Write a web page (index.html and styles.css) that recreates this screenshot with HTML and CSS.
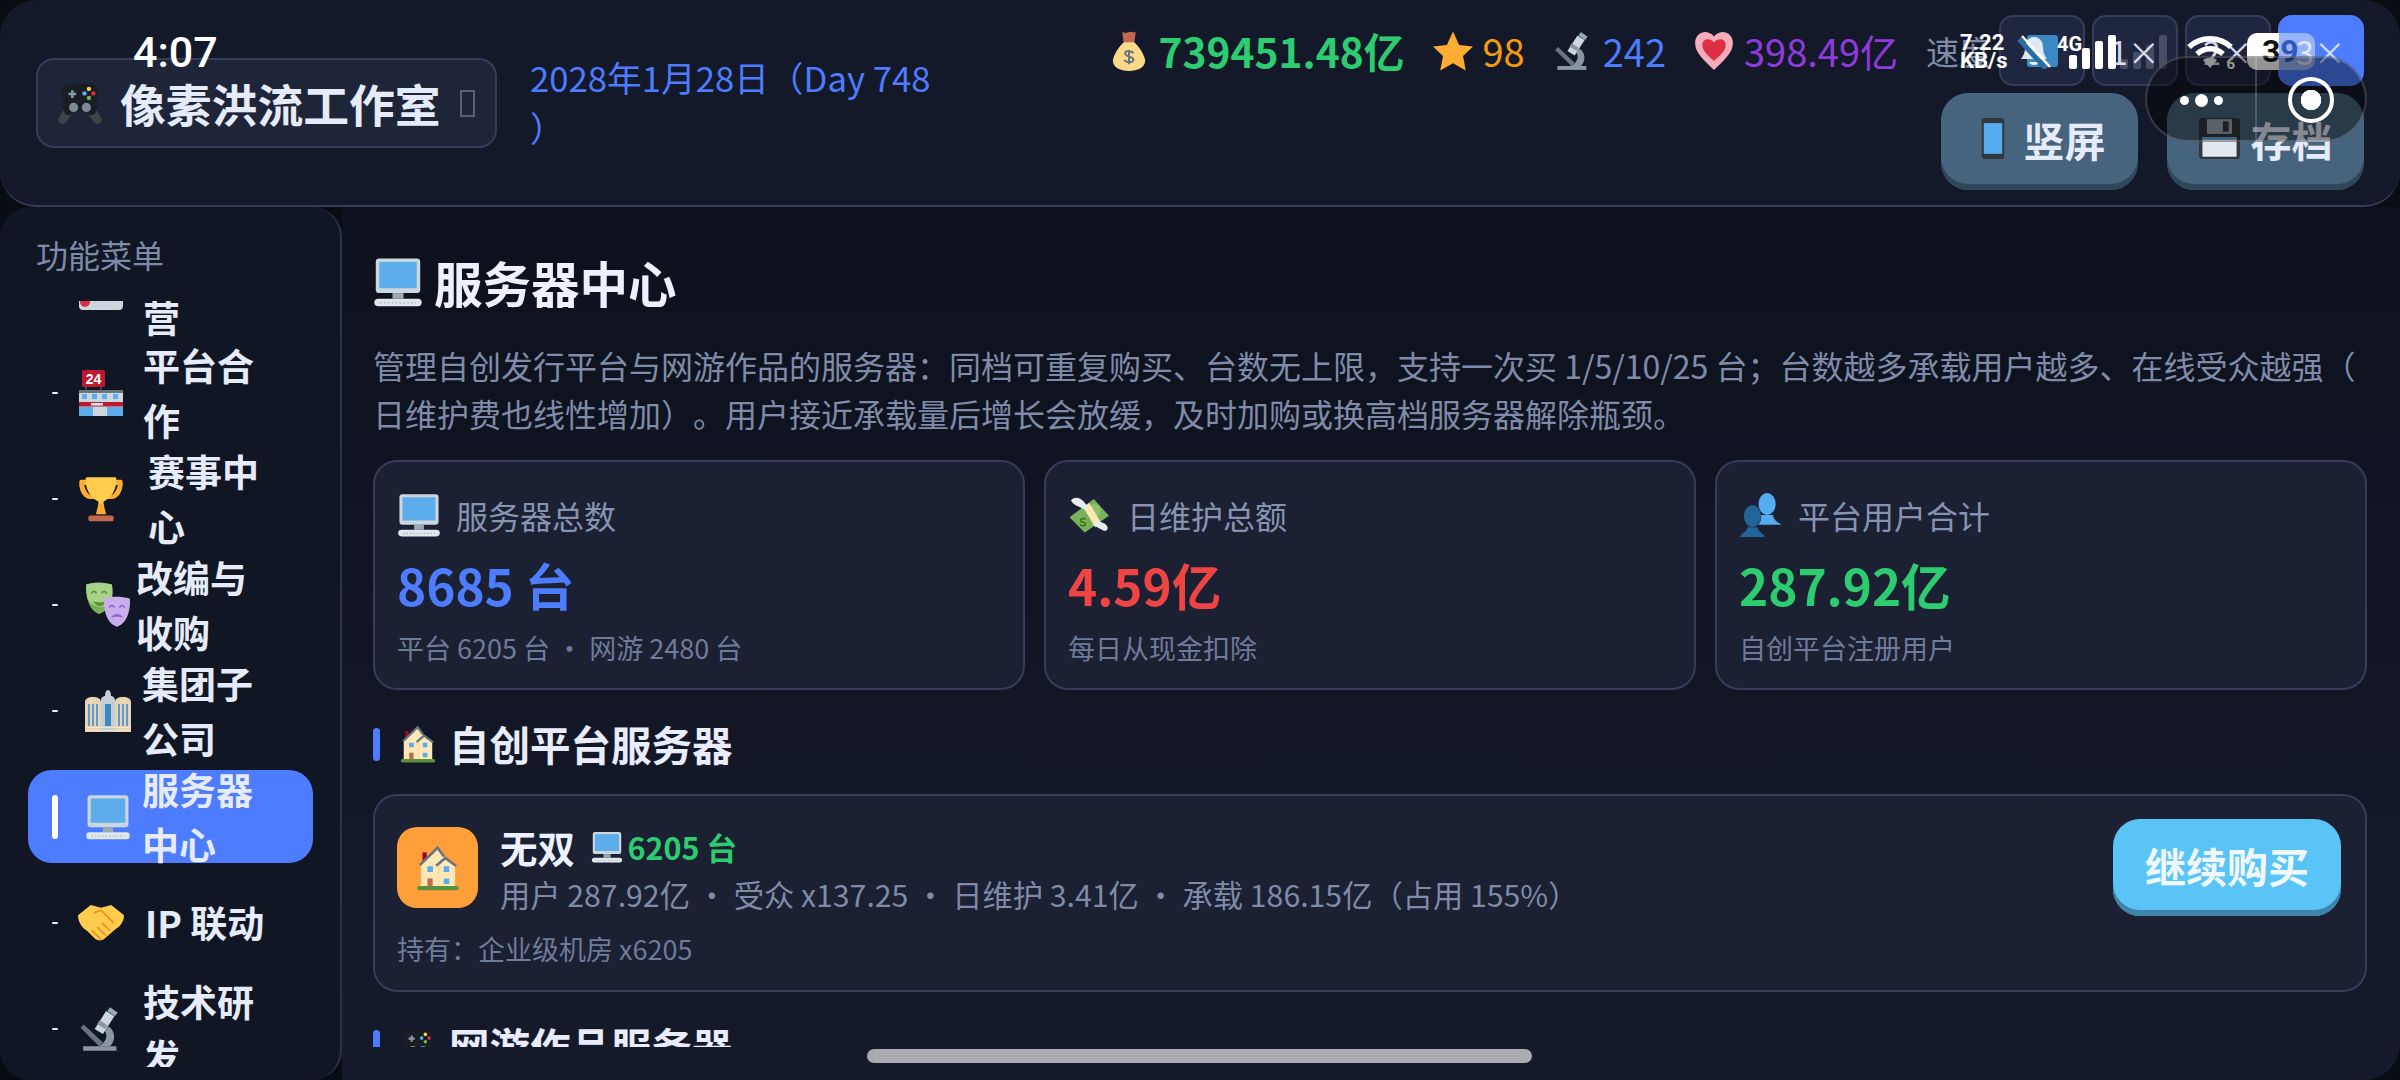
FILE: index.html
```html
<!DOCTYPE html>
<html lang="zh-CN">
<head>
<meta charset="UTF-8">
<meta name="viewport" content="width=device-width, initial-scale=1.0">
<title>像素洪流工作室 - 服务器中心</title>
<link rel="stylesheet" href="styles.css">
</head>
<body>

<!-- emoji drawn as symbols, reused below -->
<svg class="sprites" xmlns="http://www.w3.org/2000/svg">
    <symbol id="i-desktop" viewBox="0 0 36 36">
        <rect x="2" y="1" width="32" height="25" rx="2.5" fill="#ccd6dd"/>
        <rect x="4.5" y="3.5" width="27" height="19" fill="#5dadec"/>
        <rect x="14" y="26" width="8" height="4" fill="#99aab5"/>
        <rect x="1" y="30" width="34" height="5.5" rx="2.7" fill="#e1e8ed"/>
        <path d="M5 33h26" stroke="#a8b4bc" stroke-width="1" stroke-dasharray="1.2 1.6"/>
    </symbol>
    <symbol id="i-gamepad" viewBox="0 0 36 36">
        <path d="M7 20 1 31c0 3 3 4 5 3l6-7zM29 20l6 11c0 3-3 4-5 3l-6-7z" fill="#3d4349"/>
        <path d="M10 3h16c4 0 6 3 6 7l-1 13c-1 5-5 6-8 3-2-2-8-2-10 0-3 3-7 2-8-3L4 10c0-4 2-7 6-7z" fill="#1a1e22"/>
        <path d="M9 10h2V8h2v2h2v2h-2v2h-2v-2H9z" fill="#8899a6"/>
        <circle cx="25" cy="7" r="1.7" fill="#ffcc4d"/>
        <circle cx="25" cy="14" r="1.7" fill="#77b255"/>
        <circle cx="21.5" cy="10.5" r="1.7" fill="#5dadec"/>
        <circle cx="28.5" cy="10.5" r="1.7" fill="#dd2e44"/>
        <circle cx="13" cy="21.5" r="3.6" fill="#7b8a96"/>
        <circle cx="23" cy="21.5" r="3.6" fill="#7b8a96"/>
    </symbol>
    <symbol id="i-money" viewBox="0 0 36 36">
        <path d="M12 1c2 1 4 1 6 0s4 1 6 0l-1 8H13z" fill="#bf6952"/>
        <path d="M14.500 9h7c5 4 11 13 11 18 0 6-7 9-14.500 9S3.500 33 3.500 27c0-5 6-14 11-18z" fill="#fdd888"/>
        <rect x="13" y="7.500" width="10" height="2.600" rx="1" fill="#bf6952"/>
        <path d="M22 20c-1-2-7-3-7.500 0-.5 3.500 7.500 2.500 7.500 6 0 3-7 2.500-8 0M18 17v13" fill="none" stroke="#67757f" stroke-width="1.800"/>
    </symbol>
    <symbol id="i-star" viewBox="0 0 36 36">
        <path d="M18 .5 23.500 12.500 36 14l-9 8.500 2.500 13L18 29 6.500 35.500 9 22.500 0 14l12.500-1.500z" fill="#ffac33"/>
    </symbol>
    <symbol id="i-micro" viewBox="0 0 36 36">
        <path d="M4 35h26v-3.500H4z" fill="#8a97a2"/>
        <path d="M2 17l2.500-2.500 15 14-3 3z" fill="#66757f"/>
        <path d="M24 16c5 3 6 11 1 15.500h-9c5-2 8-8 5-12z" fill="#8a97a2"/>
        <path d="M22 4l6.500 4-9 14-6.500-4z" fill="#ccd6dd"/>
        <path d="M17 11l6 4-2 3-6-4z" fill="#8a97a2"/>
        <path d="M25 1l6 4-2 3-6-4z" fill="#99aab5"/>
    </symbol>
    <symbol id="i-heart" viewBox="0 0 36 36">
        <path d="M18 35C10 27 1 20 1 11 1 5 5 1 10.500 1c3 0 6 2 7.500 4 1.500-2 4.500-4 7.500-4C31 1 35 5 35 11c0 9-9 16-17 24z" fill="#f4abba"/>
        <path d="M18 27C13 22 7.500 18 7.500 12.500c0-3 2-5 5-5 2 0 4 1 5.500 3 1.500-2 3.500-3 5.500-3 3 0 5 2 5 5C28.500 18 23 22 18 27z" fill="#dd2e44"/>
    </symbol>
    <symbol id="i-phone" viewBox="0 0 24 40">
        <rect x="1" y="0" width="22" height="40" rx="3" fill="#31373d"/>
        <rect x="3" y="5" width="18" height="30" fill="#55acee"/>
    </symbol>
    <symbol id="i-floppy" viewBox="0 0 36 36">
        <rect x="0" y="0" width="36" height="36" rx="3" fill="#31373d"/>
        <rect x="7" y="1" width="22" height="13" fill="#99aab5"/>
        <rect x="21" y="3" width="5" height="9" fill="#31373d"/>
        <rect x="3" y="17" width="30" height="17" fill="#e1e8ed"/>
        <rect x="3" y="17" width="30" height="2" fill="#55acee"/>
    </symbol>
    <symbol id="i-hidden" viewBox="0 0 44 46">
        <rect x="0" y="20" width="44" height="26" rx="4" fill="#ccd6dd"/>
        <circle cx="6" cy="38" r="5" fill="#dd2e44"/>
    </symbol>
    <symbol id="i-trophy" viewBox="0 0 36 36">
        <path d="M8 3H3c-2 0-2 1-2 3 0 4 2 11 8 12h4v-3H10C7 14 5 9 5 7h3zM28 3h5c2 0 2 1 2 3 0 4-2 11-8 12h-4v-3h3c3-1 5-6 5-8h-3z" fill="#ffac33"/>
        <path d="M7 1h22c1 0 1 1 1 2 0 9-5 15-10 17v5h-4v-5C11 18 6 12 6 3c0-1 0-2 1-2z" fill="#ffcc4d"/>
        <path d="M16 22h4l2 8h-8z" fill="#ffac33"/>
        <rect x="8" y="31" width="20" height="4.500" rx="2" fill="#c1694f"/>
    </symbol>
    <symbol id="i-masks" viewBox="0 0 36 36">
        <path d="M1 2c6-2 13-2 20 0 1 8 0 20-10 23C3 23 0 10 1 2z" fill="#77b255"/>
        <path d="M1 2c6-2 13-2 20 0 1 5 1 11-2 16-7 3-14 1-17-5-1-4-1-8-1-11z" fill="#a6d388"/>
        <path d="M6 15c3 5 9 5 11 0-3 1-8 1-11 0z" fill="#5c913b"/>
        <path d="M5 9c1-2 3-2 4 0M13 9c1-2 3-2 4 0" fill="none" stroke="#5c913b" stroke-width="1.200"/>
        <path d="M15 13c6-2 13-2 20 0 1 8-2 20-10 22-8-2-11-14-10-22z" fill="#c8aeeb"/>
        <path d="M20 28c2-4 8-4 10 0-3-1-7-1-10 0z" fill="#9266cc"/>
        <path d="M19 20c1-2 3-2 4 0M27 20c1-2 3-2 4 0" fill="none" stroke="#9266cc" stroke-width="1.200"/>
    </symbol>
    <symbol id="i-corp" viewBox="0 0 46 42">
        <path d="M0 12c0-3 3-5 8-5s8 2 8 5v30H0zM30 12c0-3 3-5 8-5s8 2 8 5v30H30z" fill="#e8d3b4"/>
        <path d="M16 10c0-3 3-4 4-4 0-3 1-6 3-6s3 3 3 6c1 0 4 1 4 4v32H16z" fill="#c4ced6"/>
        <path d="M3 14h2v22H3zM7 14h2v22H7zM11 14h2v22h-2zM33 14h2v22h-2zM37 14h2v22h-2zM41 14h2v22h-2z" fill="#5d9ccf"/>
        <path d="M20 14h6v22h-6z" fill="#3b88c3"/>
        <path d="M0 37.500h46M0 40.500h46" stroke="#f5e4c8" stroke-width="1.200"/>
    </symbol>
    <symbol id="i-shake" viewBox="0 0 36 36">
        <path d="M0 12 10 4l8 2 8-2 10 8c0 5-3 9-7 11l-9 8c-2 1-5 1-7-1l-6-6C3 22 0 17 0 12z" fill="#ffcc4d"/>
        <path d="M11 24l7 7M15 21l7 7M19 18l6 6M12 10l6-2 10 10" fill="none" stroke="#f19020" stroke-width="1.400"/>
    </symbol>
    <symbol id="i-wings" viewBox="20 15 145 125">
        <path d="M25 85 105 25l50 55-80 55z" fill="#78b159"/>
        <circle cx="108" cy="62" r="20" fill="#8fc46c"/>
        <path d="M70 52 90 38l40 67-20 13z" fill="#ffe8b6"/>
        <path d="M78 92c-6-6-18-2-16 5s16 2 16 10-14 8-19 2" fill="none" stroke="#3e721d" stroke-width="5"/>
        <path d="M30 30c5-10 20-12 30-6 12 7 20 18 26 28l-10 10C62 50 38 48 30 30zM100 108l12-10c14 2 34 6 38 18 3 9-4 16-12 13-12-5-26-13-38-21z" fill="#e6ebf0"/>
    </symbol>
    <symbol id="i-busts" viewBox="0 0 36 36">
        <ellipse cx="23" cy="9" rx="7" ry="9" fill="#55acee"/>
        <path d="M16 26c3-4 2-8 2-8h10s-1 4 7 8z" fill="#55acee"/>
        <ellipse cx="11" cy="19" rx="7" ry="9" fill="#226699"/>
        <path d="M1 36c1-4 5-3 6-8h8c1 5 5 4 6 8z" fill="#226699"/>
    </symbol>
    <symbol id="i-house" viewBox="60 65 135 140">
        <rect x="80" y="87" width="13" height="30" fill="#a0041e"/>
        <path d="M75 125 125 75l25 30 30 23v62H75z" fill="#ffe8b6"/>
        <path d="M130 128v62" stroke="#f0cf8f" stroke-width="2"/>
        <path d="M72 126 126 73l20 27M122 128l28-24 33 25" fill="none" stroke="#66757f" stroke-width="8"/>
        <rect x="95" y="167" width="16" height="24" fill="#c1694f"/>
        <path d="M95 130h17v17H95zM145 130h17v17h-17zM145 167h17v17h-17z" fill="#55acee"/>
        <rect x="64" y="190" width="127" height="13" rx="6" fill="#5c913b"/>
    </symbol>
</svg>

<header class="topbar">
    <div class="brand">
        <svg class="emo brand-icon"><use href="#i-gamepad"/></svg>
        <span class="brand-name">像素洪流工作室</span>
        <span class="tofu"></span>
    </div>
    <div class="date">2028年1月28日（Day 748 ）</div>
    <div class="topbar-right">
        <div class="stats-row">
            <div class="stat">
                <svg class="emo stat-icon"><use href="#i-money"/></svg>
                <span class="stat-money">739451.48亿</span>
            </div>
            <div class="stat">
                <svg class="emo stat-icon"><use href="#i-star"/></svg>
                <span class="stat-star">98</span>
            </div>
            <div class="stat">
                <svg class="emo stat-icon"><use href="#i-micro"/></svg>
                <span class="stat-tech">242</span>
            </div>
            <div class="stat">
                <svg class="emo stat-icon"><use href="#i-heart"/></svg>
                <span class="stat-fans">398.49亿</span>
            </div>
            <span class="speed-label">速度</span>
            <div class="speed-btns">
                <button class="speed-btn"><span class="pause-square"></span></button>
                <button class="speed-btn">1×</button>
                <button class="speed-btn">2×</button>
                <button class="speed-btn speed-btn--on">3×</button>
            </div>
        </div>
        <div class="action-row">
            <button class="action-btn"><svg class="emo action-phone"><use href="#i-phone"/></svg>竖屏</button>
            <button class="action-btn"><svg class="emo action-floppy"><use href="#i-floppy"/></svg>存档</button>
        </div>
    </div>
</header>

<div class="layout">
    <aside class="sidebar">
        <div class="sidebar-title">功能菜单</div>
        <nav class="nav-list">
            <a class="nav-item nav-item--first pos-store">
                <span class="nav-bar"></span>
                <svg class="emo nav-icon"><use href="#i-hidden"/></svg>
                <span class="nav-text">平台运营</span>
            </a>
            <a class="nav-item pos-store">
                <span class="nav-bar"></span>
                <svg class="emo nav-icon" viewBox="0 0 44 46">
                    <rect x="3" y="0" width="23" height="17" rx="1.500" fill="#be1931"/>
                    <text x="14.500" y="14" text-anchor="middle" class="sign-text">24</text>
                    <path d="M7 17v3M22 17v3" stroke="#66757f"/>
                    <rect x="0" y="20" width="44" height="26" rx="1.500" fill="#ccd6dd"/>
                    <rect x="0" y="20" width="44" height="3" fill="#66757f"/>
                    <path d="M3 24h5v5H3zM13 24h5v5h-5zM23 24h5v5h-5zM34 24h5v5h-5z" fill="#5dadec"/>
                    <rect x="0" y="32" width="44" height="4.500" fill="#be1931"/>
                    <rect x="12" y="33" width="12" height="2.500" fill="#e1e8ed"/>
                    <path d="M0 37h14v9H0zM28 37h16v9H28z" fill="#5dadec"/>
                </svg>
                <span class="nav-text">平台合作</span>
            </a>
            <a class="nav-item pos-trophy">
                <span class="nav-bar"></span>
                <svg class="emo nav-icon"><use href="#i-trophy"/></svg>
                <span class="nav-text">赛事中心</span>
            </a>
            <a class="nav-item pos-masks">
                <span class="nav-bar"></span>
                <svg class="emo nav-icon"><use href="#i-masks"/></svg>
                <span class="nav-text">改编与收购</span>
            </a>
            <a class="nav-item pos-corp">
                <span class="nav-bar"></span>
                <svg class="emo nav-icon"><use href="#i-corp"/></svg>
                <span class="nav-text">集团子公司</span>
            </a>
            <a class="nav-item nav-item--active pos-corp">
                <span class="nav-bar"></span>
                <svg class="emo nav-icon"><use href="#i-desktop"/></svg>
                <span class="nav-text">服务器中心</span>
            </a>
            <a class="nav-item pos-ip">
                <span class="nav-bar"></span>
                <svg class="emo nav-icon"><use href="#i-shake"/></svg>
                <span class="nav-text nav-text--line">IP 联动</span>
            </a>
            <a class="nav-item pos-store">
                <span class="nav-bar"></span>
                <svg class="emo nav-icon"><use href="#i-micro"/></svg>
                <span class="nav-text">技术研发</span>
            </a>
        </nav>
    </aside>

    <main class="main">
        <div class="main-scroll">
            <h1 class="page-title"><svg class="emo title-icon"><use href="#i-desktop"/></svg>服务器中心</h1>
            <p class="page-desc">管理自创发行平台与网游作品的服务器：同档可重复购买、台数无上限，支持一次买 1/5/10/25 台；台数越多承载用户越多、在线受众越强（日维护费也线性增加）。用户接近承载量后增长会放缓，及时加购或换高档服务器解除瓶颈。</p>

            <div class="summary-grid">
                <div class="summary-card">
                    <div class="summary-label"><svg class="emo summary-icon"><use href="#i-desktop"/></svg>服务器总数</div>
                    <div class="summary-value val-blue">8685 台</div>
                    <div class="summary-sub">平台 6205 台 · 网游 2480 台</div>
                </div>
                <div class="summary-card">
                    <div class="summary-label"><svg class="emo summary-icon"><use href="#i-wings"/></svg>日维护总额</div>
                    <div class="summary-value val-red">4.59亿</div>
                    <div class="summary-sub">每日从现金扣除</div>
                </div>
                <div class="summary-card">
                    <div class="summary-label"><svg class="emo summary-icon"><use href="#i-busts"/></svg>平台用户合计</div>
                    <div class="summary-value val-green">287.92亿</div>
                    <div class="summary-sub">自创平台注册用户</div>
                </div>
            </div>

            <h2 class="section-title"><svg class="emo section-icon"><use href="#i-house"/></svg>自创平台服务器</h2>
            <div class="server-card">
                <div class="server-info">
                    <div class="server-head">
                        <div class="server-thumb"><svg class="emo thumb-icon"><use href="#i-house"/></svg></div>
                        <div class="server-lines">
                            <div class="server-name">无双 <svg class="emo name-icon"><use href="#i-desktop"/></svg><span class="server-count">6205 台</span></div>
                            <div class="server-meta">用户 287.92亿 · 受众 x137.25 · 日维护 3.41亿 · 承载 186.15亿（占用 155%）</div>
                        </div>
                    </div>
                    <div class="server-own">持有：企业级机房 x6205</div>
                </div>
                <button class="buy-btn">继续购买</button>
            </div>

            <h2 class="section-title section-title--next"><svg class="emo section-icon"><use href="#i-gamepad"/></svg>网游作品服务器</h2>
        </div>
    </main>
</div>

<!-- phone system layer on top of the page -->
<div class="sys-time">4:07</div>
<div class="sys-status">
    <div class="sys-speed">7.22<br>KB/s</div>
    <svg class="sys-bell" viewBox="0 0 34 34">
        <path d="M17 2c6 0 9 5 9 11 0 5 2 8 4 11H4c2-3 4-6 4-11 0-6 3-11 9-11z" fill="#eef2f8" fill-opacity="0.92"/>
        <path d="M12 27c1 4 9 4 10 0z" fill="#eef2f8"/>
        <path d="M2 4l27 30" stroke="#2a6d9e" stroke-width="5"/>
        <path d="M5 1l28 31" stroke="#fff" stroke-width="2.500"/>
    </svg>
    <div class="sys-net">4G</div>
    <svg class="sys-signal" viewBox="0 0 50 34">
        <rect x="0" y="20" width="8" height="14" rx="2"/>
        <rect x="13" y="13" width="8" height="21" rx="2"/>
        <rect x="26" y="6" width="8" height="28" rx="2"/>
        <rect x="39" y="0" width="8" height="34" rx="2"/>
    </svg>
    <svg class="sys-ghost" viewBox="0 0 50 34">
        <rect x="0" y="24" width="8" height="10" rx="2"/>
        <rect x="13" y="17" width="8" height="17" rx="2"/>
        <rect x="26" y="10" width="8" height="24" rx="2"/>
        <rect x="39" y="0" width="8" height="34" rx="2"/>
    </svg>
    <div class="sys-wifi">
        <svg viewBox="0 0 46 32">
            <path d="M2 11C14 0 32 0 44 11" fill="none" stroke="#fff" stroke-width="5.500"/>
            <path d="M10 18c8-7 18-7 26 0" fill="none" stroke="#fff" stroke-width="5.500"/>
            <path d="M23 32l-7-8c4-3 10-3 14 0z" fill="#fff"/>
        </svg>
        <span class="sys-wifi-num">6</span>
    </div>
    <div class="sys-battery"><span class="batt-a">3</span><span class="batt-b">9</span></div>
</div>
<div class="capsule">
    <div class="capsule-side">
        <span class="dot dot--small"></span><span class="dot"></span><span class="dot dot--small"></span>
    </div>
    <div class="capsule-side capsule-side--right"><span class="record"></span></div>
</div>
<div class="home-bar"></div>

</body>
</html>
```

FILE: styles.css
```css
html, body {
    margin: 0;
    padding: 0;
}
body {
    width: 2400px;
    height: 1080px;
    overflow: hidden;
    background-color: #0a0c14;
    color: #e6ebfa;
    font-family: "Noto Sans CJK SC", "Noto Sans", sans-serif;
    position: relative;
}
.sprites {
    width: 0;
    height: 0;
    position: absolute;
}
.emo {
    display: block;
    flex-shrink: 0;
}

/* top bar */
.topbar {
    height: 207px;
    box-sizing: border-box;
    background-color: #141929;
    border-bottom: 2px solid #363c5a;
    border-radius: 36px;
    padding: 0 36px;
    display: flex;
}
.brand {
    width: 461px;
    height: 90px;
    margin-top: 58px;
    box-sizing: border-box;
    background-color: #1e2539;
    border: 2px solid #363c5a;
    border-radius: 18px;
    padding-left: 19px;
    display: flex;
    align-items: center;
    flex-shrink: 0;
}
.brand-icon {
    width: 46px;
    height: 46px;
}
.brand-name {
    margin-left: 17px;
    font-size: 45.800px;
    font-weight: 700;
    white-space: nowrap;
}
.tofu {
    width: 11px;
    height: 23px;
    margin-left: 19px;
    border: 2px solid #59607a;
}
.date {
    width: 415px;
    margin: 52px 0 0 33px;
    font-size: 34.700px;
    line-height: 50px;
    color: #4d7cfe;
    flex-shrink: 0;
}
.topbar-right {
    margin-left: auto;
    padding-top: 15px;
    display: flex;
    flex-direction: column;
    align-items: flex-end;
    gap: 7px;
}
.stats-row {
    height: 71px;
    display: flex;
    align-items: center;
}
.stat {
    display: flex;
    align-items: center;
    font-size: 38px;
    margin-right: 28px;
    white-space: nowrap;
}
.stat-icon {
    width: 40px;
    height: 42px;
    margin-right: 10px;
}
.stat-money {
    color: #2ecc71;
    font-weight: 700;
    font-size: 40.700px;
}
.stat-star {
    color: #f39c12;
}
.stat-tech {
    color: #4d7cfe;
}
.stat-fans {
    color: #8f3bdc;
}
.speed-label {
    font-size: 33px;
    color: #7f8ba8;
    white-space: nowrap;
    width: 73px;
}
.speed-btns {
    display: flex;
    gap: 7px;
}
.speed-btn {
    width: 86px;
    height: 71px;
    box-sizing: border-box;
    padding: 0;
    background-color: #1f2640;
    border: 2px solid #363c5a;
    border-radius: 14px;
    color: #d5dbec;
    font-family: inherit;
    font-size: 32px;
    display: flex;
    align-items: center;
    justify-content: center;
}
.speed-btn--on {
    background-color: #4d7cfe;
    border-color: #4d7cfe;
    color: #cfdcff;
}
.pause-square {
    width: 31px;
    height: 32px;
    border-radius: 3px;
    background-color: #3b88c3;
}
.action-row {
    display: flex;
    gap: 29px;
}
.action-btn {
    width: 197px;
    height: 97px;
    box-sizing: border-box;
    padding: 0 0 6px;
    background-color: #47647f;
    border: none;
    border-radius: 27px;
    box-shadow: inset 0 -6px 0 #2f4759;
    color: #e6ebfa;
    font-family: inherit;
    font-size: 41px;
    font-weight: 700;
    display: flex;
    align-items: center;
    justify-content: center;
}
.action-phone {
    width: 26px;
    height: 41px;
    margin: 0 18px 0 6px;
}
.action-floppy {
    width: 41px;
    height: 41px;
    margin-right: 11px;
}

/* below the top bar */
.layout {
    height: 873px;
    display: flex;
}
.sidebar {
    width: 342px;
    box-sizing: border-box;
    background-color: #111624;
    border-right: 2px solid #2c3350;
    border-radius: 30px;
    padding-top: 3px;
    flex-shrink: 0;
    overflow: hidden;
}
.sidebar-title {
    height: 91px;
    padding: 21px 0 0 36px;
    box-sizing: border-box;
    font-size: 32px;
    line-height: 46px;
    color: #7d8ba8;
}
.nav-list {
    height: 766px;
    overflow: hidden;
    padding: 0 27px 0 28px;
}
.nav-item {
    height: 93px;
    margin-bottom: 13px;
    padding-left: 24px;
    border-radius: 24px;
    display: flex;
    align-items: center;
}
.nav-item--first {
    margin-top: -61px;
}
.nav-item--first .nav-text {
    padding-top: 6px;
}
.nav-item--active {
    background-color: #4d7cfe;
}
.nav-bar {
    width: 6px;
    height: 2px;
    border-radius: 3px;
    background-color: #e6ebfa;
    flex-shrink: 0;
}
.nav-item--active .nav-bar {
    height: 44px;
    background-color: #fff;
}
.nav-icon {
    width: 46px;
    height: 46px;
}
.nav-text {
    width: 115px;
    font-size: 37px;
    font-weight: 700;
    line-height: 55px;
    color: #e6ebfa;
}
.nav-text--line {
    white-space: nowrap;
}
.pos-store .nav-icon { margin-left: 20px; }
.pos-store .nav-text { margin-left: 19px; }
.pos-trophy .nav-icon { margin-left: 20px; }
.pos-trophy .nav-text { margin-left: 24px; }
.pos-masks .nav-icon { margin-left: 27px; }
.pos-masks .nav-text { margin-left: 5px; }
.pos-corp .nav-icon { margin-left: 27px; }
.pos-corp .nav-text { margin-left: 11px; }
.pos-ip .nav-icon { margin-left: 20px; }
.pos-ip .nav-text { margin-left: 21px; }
.sign-text {
    font-family: "Liberation Sans", sans-serif;
    font-size: 14px;
    font-weight: 700;
    fill: #fff;
}

/* main column */
.main {
    flex: 1;
    height: 873px;
    border-radius: 0 0 36px 0;
    background: linear-gradient(#0d111d, #151a2b 90%);
}
.main-scroll {
    height: 840px;
    overflow: hidden;
    box-sizing: border-box;
    padding: 0 33px 0 31px;
}
.page-title {
    margin: 40px 0 0;
    height: 70px;
    font-size: 48.500px;
    font-weight: 700;
    line-height: 70px;
    color: #edf1ff;
    display: flex;
    align-items: center;
}
.title-icon {
    width: 50px;
    height: 50px;
    margin-right: 11px;
}
.page-desc {
    margin: 24px 0 0;
    font-size: 32px;
    line-height: 48px;
    line-break: anywhere;
    text-spacing-trim: space-all;
    color: #7f8ba8;
}
.summary-grid {
    margin-top: 23px;
    display: grid;
    grid-template-columns: repeat(3, 1fr);
    gap: 19px;
}
.summary-card {
    height: 230px;
    box-sizing: border-box;
    padding: 28px 22px 0;
    background-color: #1b2033;
    border: 2px solid #363c5a;
    border-radius: 24px;
}
.summary-label {
    height: 50px;
    font-size: 32px;
    color: #8793b0;
    display: flex;
    align-items: center;
}
.summary-icon {
    width: 44px;
    height: 44px;
    margin-right: 15px;
}
.summary-value {
    margin-top: 10px;
    height: 70px;
    font-size: 49.500px;
    line-height: 70px;
    font-weight: 700;
}
.val-blue { color: #4d7cfe; }
.val-red { color: #ef4444; }
.val-green { color: #2ecc71; }
.summary-sub {
    margin-top: 8px;
    font-size: 27px;
    line-height: 40px;
    color: #6f7b98;
}
.section-title {
    margin: 25px 0 0;
    height: 58px;
    font-size: 40.500px;
    font-weight: 700;
    line-height: 58px;
    color: #e8ecfb;
    display: flex;
    align-items: center;
}
.section-title::before {
    content: "";
    width: 7px;
    height: 33px;
    border-radius: 4px;
    background-color: #4d7cfe;
    margin-right: 19px;
}
.section-icon {
    width: 38px;
    height: 38px;
    margin-right: 12px;
}
.server-card {
    margin-top: 21px;
    height: 198px;
    box-sizing: border-box;
    padding: 26px 24px 0 22px;
    background-color: #1b2033;
    border: 2px solid #363c5a;
    border-radius: 24px;
    display: flex;
    justify-content: space-between;
}
.server-head {
    display: flex;
    gap: 22px;
}
.server-thumb {
    width: 81px;
    height: 81px;
    margin-top: 5px;
    border-radius: 20px;
    background-color: #ff9f3a;
    display: flex;
    align-items: center;
    justify-content: center;
}
.thumb-icon {
    width: 44px;
    height: 46px;
}
.server-name {
    font-size: 37.500px;
    font-weight: 700;
    line-height: 50px;
    color: #edf1ff;
    display: flex;
    align-items: center;
    white-space: pre;
}
.name-icon {
    width: 32px;
    height: 32px;
    margin: 0 5px 0 7px;
}
.server-count {
    font-size: 30.500px;
    color: #2ecc71;
}
.server-meta {
    font-size: 30.250px;
    line-height: 44px;
    color: #7f8ba8;
    white-space: nowrap;
}
.server-own {
    margin-top: 13px;
    font-size: 27px;
    line-height: 40px;
    color: #6f7b98;
}
.buy-btn {
    width: 228px;
    height: 97px;
    margin-top: -3px;
    box-sizing: border-box;
    padding: 0 0 6px;
    background-color: #5ac4f6;
    border: none;
    border-radius: 27px;
    box-shadow: inset 0 -6px 0 #3f83a8;
    color: #f0f8ff;
    font-family: inherit;
    font-size: 41px;
    font-weight: 700;
}

/* system overlay */
.sys-time {
    position: absolute;
    left: 133px;
    top: 25px;
    font-family: "Roboto", sans-serif;
    font-size: 43px;
    font-weight: 500;
    line-height: 54px;
    color: #fff;
}
.sys-status {
    position: absolute;
    left: 1960px;
    top: 33px;
    height: 37px;
    display: flex;
    align-items: center;
    color: #fff;
}
.sys-speed {
    width: 52px;
    font-family: "Roboto", sans-serif;
    font-size: 22px;
    font-weight: 700;
    line-height: 18px;
}
.sys-bell {
    width: 34px;
    height: 34px;
    margin-left: 5px;
}
.sys-net {
    margin: -16px 0 0 6px;
    width: 26px;
    font-family: "Roboto", sans-serif;
    font-size: 20px;
    font-weight: 700;
}
.sys-signal {
    width: 50px;
    height: 34px;
    margin-left: -14px;
    fill: #fff;
}
.sys-ghost {
    width: 50px;
    height: 34px;
    margin-left: 1px;
    fill: #fff;
    opacity: 0.18;
}
.sys-wifi {
    width: 46px;
    height: 32px;
    margin-left: 17px;
    position: relative;
}
.sys-wifi-num {
    position: absolute;
    right: -2px;
    bottom: -5px;
    font-family: "Roboto", sans-serif;
    font-size: 15px;
    font-weight: 700;
}
.sys-battery {
    width: 68px;
    height: 37px;
    margin-left: 14px;
    border-radius: 10px;
    background: linear-gradient(90deg, #fff 47%, rgba(255, 255, 255, 0.42) 47%);
    font-family: "Roboto", sans-serif;
    font-size: 32px;
    font-weight: 700;
    line-height: 37px;
    text-align: left;
    padding-left: 15px;
    box-sizing: border-box;
}
.batt-a { color: #111; }
.batt-b { color: #3456b8; }
.capsule {
    position: absolute;
    left: 2145px;
    top: 56px;
    width: 222px;
    height: 86px;
    box-sizing: border-box;
    border: 2px solid rgba(255, 255, 255, 0.18);
    border-radius: 43px;
    background-color: rgba(0, 0, 0, 0.42);
    display: flex;
}
.capsule-side {
    width: 110px;
    height: 84px;
    display: flex;
    align-items: center;
    justify-content: center;
    gap: 6px;
}
.capsule-side--right {
    border-left: 2px solid rgba(255, 255, 255, 0.18);
    height: 68px;
    padding-top: 16px;
}
.dot {
    width: 13px;
    height: 13px;
    border-radius: 50%;
    background-color: #fff;
}
.dot--small {
    width: 9px;
    height: 9px;
}
.record {
    width: 38px;
    height: 38px;
    border-radius: 50%;
    border: 4px solid #fff;
    margin-top: -16px;
    background: radial-gradient(circle, #fff 0, #fff 10px, transparent 10.500px);
}
.home-bar {
    position: absolute;
    left: 867px;
    top: 1049px;
    width: 665px;
    height: 14px;
    border-radius: 7px;
    background-color: #a9abb0;
}
```
